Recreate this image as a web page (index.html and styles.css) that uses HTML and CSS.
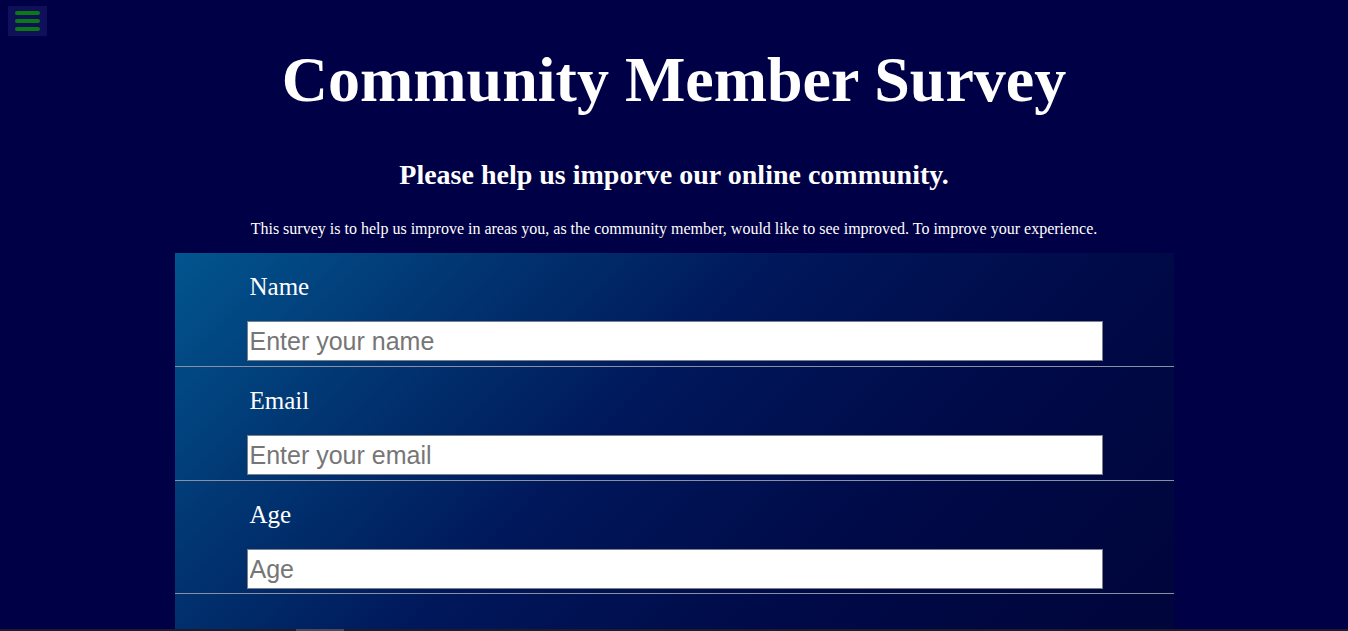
FILE: index.html
```html
<!DOCTYPE html>
<html lang="en">
<head>
<meta charset="utf-8">
<title>Community Member Survey</title>
<link rel="stylesheet" href="styles.css">
</head>
<body>
<button class="menu-btn" aria-label="Menu">
  <span class="bar"></span>
  <span class="bar"></span>
  <span class="bar"></span>
</button>
<header class="header">
  <h1 class="title">Community Member Survey</h1>
  <h2 class="subtitle">Please help us imporve our online community.</h2>
  <p class="description">This survey is to help us improve in areas you, as the community member, would like to see improved. To improve your experience.</p>
</header>
<form class="survey">
  <div class="field">
    <label class="field-label" for="name">Name</label>
    <input class="field-input" id="name" type="text" placeholder="Enter your name">
  </div>
  <div class="field">
    <label class="field-label" for="email">Email</label>
    <input class="field-input" id="email" type="email" placeholder="Enter your email">
  </div>
  <div class="field field-last">
    <label class="field-label" for="age">Age</label>
    <input class="field-input" id="age" type="number" placeholder="Age">
  </div>
  <div class="field-rest"></div>
</form>
<div class="bottom-strip"><span class="strip-thumb"></span></div>
</body>
</html>
```
FILE: styles.css
```css
html, body {
  margin: 0;
  padding: 0;
  overflow: hidden;
}
body {
  background: #000046;
  color: #ffffff;
  font-family: "Liberation Serif", "Times New Roman", serif;
}
.menu-btn {
  position: absolute;
  top: 6px;
  left: 8px;
  width: 39px;
  height: 30px;
  padding: 0;
  border: none;
  background: #10105a;
  display: flex;
  flex-direction: column;
  align-items: center;
  justify-content: center;
  gap: 4px;
}
.menu-btn .bar {
  display: block;
  width: 25px;
  height: 4px;
  border-radius: 2px;
  background: #0b7a12;
}
.header {
  text-align: center;
  padding-top: 1px;
}
.title {
  font-size: 64px;
  font-weight: bold;
  margin: 42px 0 0;
  line-height: 74px;
}
.subtitle {
  font-size: 28px;
  font-weight: bold;
  margin: 42px 0 0;
  line-height: 32px;
}
.description {
  font-size: 16px;
  margin: 29px 0 0;
  line-height: 18px;
}
.survey {
  width: 999px;
  margin: 15px auto 0;
  background: linear-gradient(135deg, #02558f 0%, #013672 22%, #00175a 45%, #000a48 70%, #00053a 100%);
}
.field {
  padding: 19px 0 5px 72px;
  border-bottom: 1px solid #8a8fa8;
  display: flex;
  flex-direction: column;
  align-items: flex-start;
}
.field-last {
  padding-bottom: 4px;
}
.field-label {
  font-size: 25px;
  line-height: 29px;
  margin-left: 3px;
}
.field-input {
  box-sizing: border-box;
  margin-top: 20px;
  width: 856px;
  height: 40px;
  border: 1px solid #7a7f8c;
  border-radius: 0;
  padding: 0 2px;
  background: #ffffff;
  font-family: "Liberation Sans", Arial, sans-serif;
  font-size: 25px;
  color: #222;
}
.field-input::placeholder {
  color: #767676;
}
.field-rest {
  height: 36px;
}
.bottom-strip {
  position: fixed;
  left: 0;
  right: 0;
  bottom: 0;
  height: 2px;
  background: #1c1c2c;
}
.strip-thumb {
  position: absolute;
  left: 296px;
  width: 48px;
  top: 0;
  height: 2px;
  background: #4a4a56;
}
```
